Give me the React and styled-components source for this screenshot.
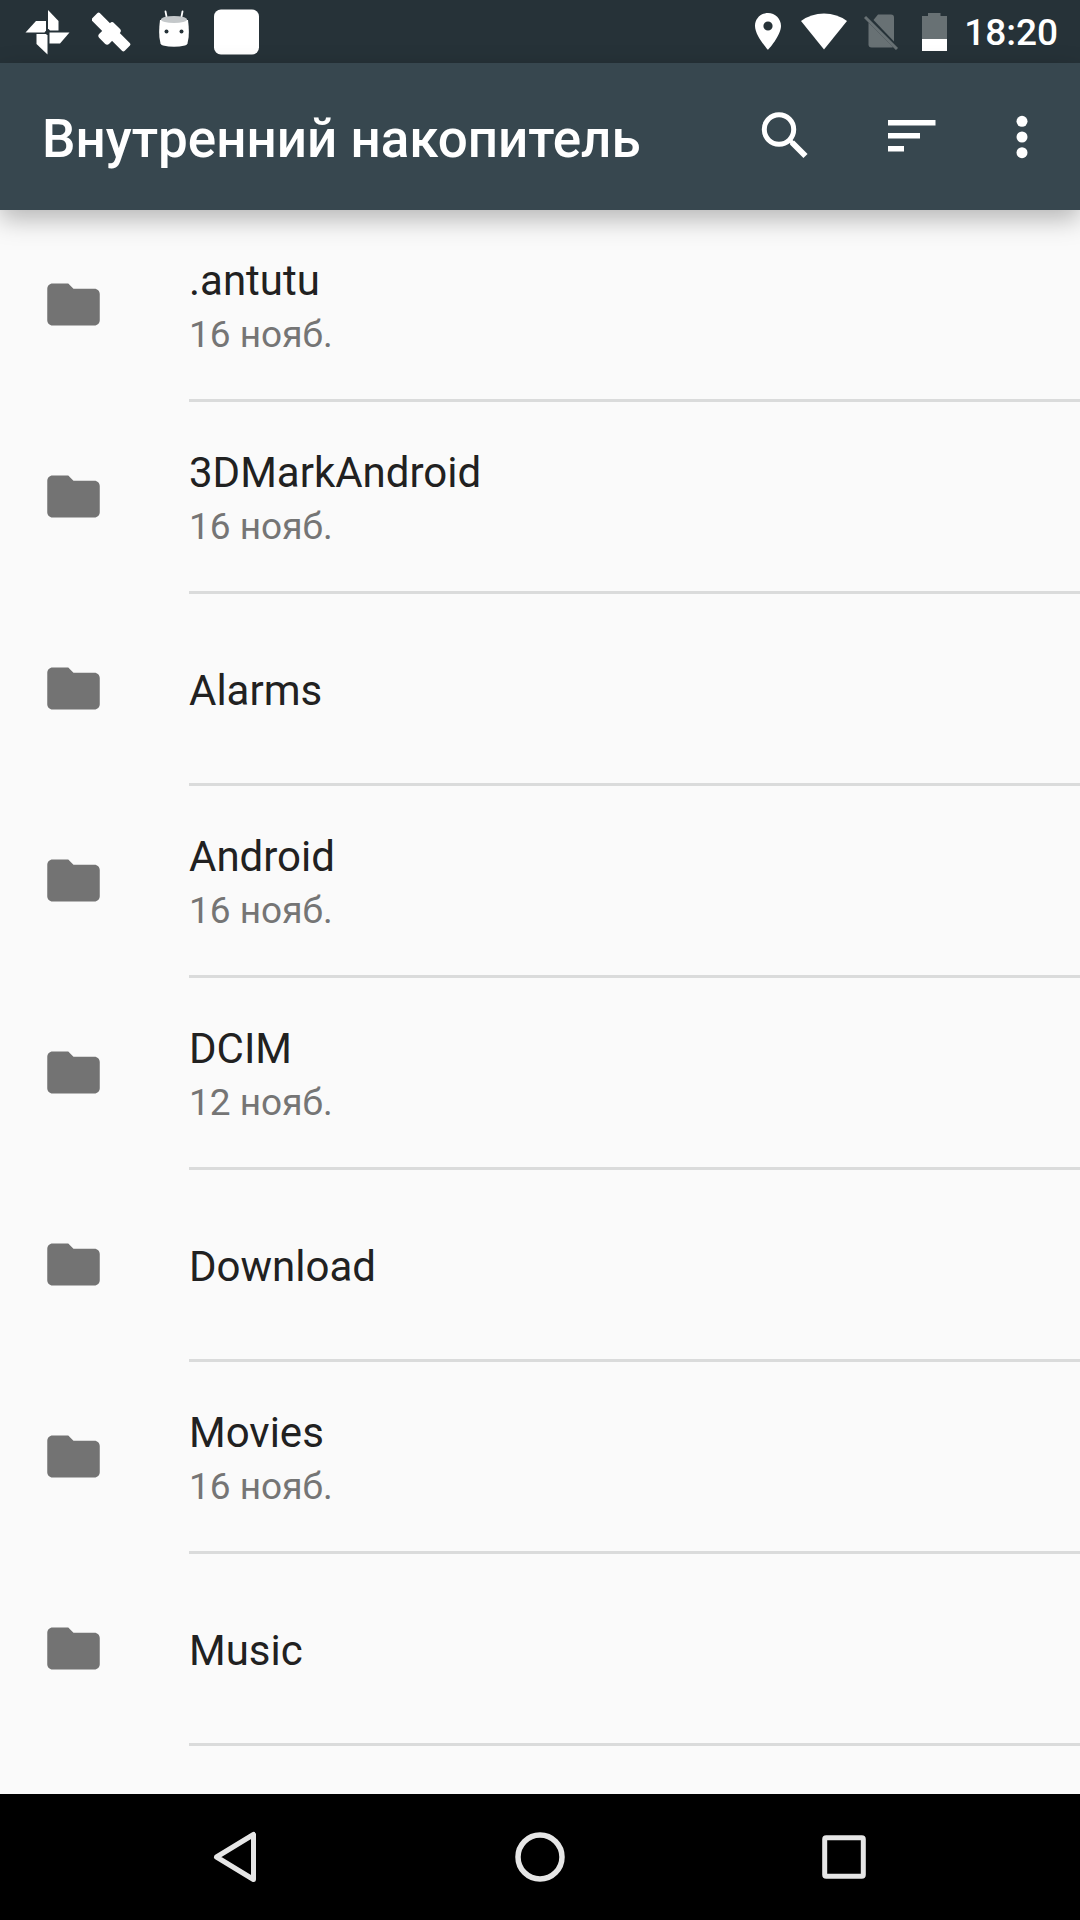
import React from 'react';
import styled, { createGlobalStyle } from 'styled-components';

const GlobalStyle = createGlobalStyle`
  * {
    box-sizing: border-box;
  }

  body {
    margin: 0;
    background: #fafafa;
    font-family: Roboto, 'Noto Sans', sans-serif;
  }

  button {
    padding: 0;
    border: 0;
    background: none;
    color: inherit;
    font: inherit;
  }

  svg {
    display: block;
    flex-shrink: 0;
  }
`;

const FOLDERS = [
  { name: '.antutu', date: '16 нояб.' },
  { name: '3DMarkAndroid', date: '16 нояб.' },
  { name: 'Alarms' },
  { name: 'Android', date: '16 нояб.' },
  { name: 'DCIM', date: '12 нояб.' },
  { name: 'Download' },
  { name: 'Movies', date: '16 нояб.' },
  { name: 'Music' },
];

const Screen = styled.div`
  display: flex;
  flex-direction: column;
  min-height: 100vh;
`;

const StatusBar = styled.div`
  display: flex;
  align-items: center;
  justify-content: space-between;
  height: 63px;
  padding: 0 22px 0 24px;
  background: #263238;
  color: #fff;
`;

const StatusGroup = styled.div`
  display: flex;
  align-items: center;
  gap: ${({ $gap }) => $gap}px;
`;

const Clock = styled.time`
  padding-top: 2px;
  font-size: 37px;
  font-weight: 500;
  line-height: 44px;
`;

const AppBar = styled.header`
  position: relative;
  display: flex;
  align-items: center;
  height: 147px;
  padding: 0 38px 0 42px;
  background: #37474f;
  color: #fff;
  box-shadow: 0 9px 24px rgba(0, 0, 0, 0.28);
`;

const Title = styled.h1`
  flex: 1;
  margin: 0;
  padding-top: 4px;
  font-size: 53px;
  font-weight: 500;
  line-height: 64px;
`;

const Actions = styled.div`
  display: flex;
  align-items: center;
  gap: 54px;
`;

const IconButton = styled.button`
  display: flex;
  align-items: center;
  justify-content: center;
  width: ${({ $width }) => $width || 72}px;
  height: 72px;
`;

const List = styled.ul`
  flex: 1;
  margin: 0;
  padding: 0;
  list-style: none;
`;

const Row = styled.li`
  display: flex;
  height: 192px;
`;

const FolderCell = styled.div`
  display: flex;
  align-items: center;
  width: 189px;
  padding: 0 0 3px 42px;
  color: #737373;
`;

const TextCell = styled.div`
  display: flex;
  flex: 1;
  flex-direction: column;
  justify-content: center;
  gap: 8px;
  padding-top: 4px;
  border-bottom: 3px solid #dadbdb;
`;

const Name = styled.span`
  color: #212121;
  font-size: 42px;
  line-height: 48px;
`;

const DateText = styled.span`
  color: #757575;
  font-size: 37px;
  line-height: 44px;
`;

const NavBar = styled.nav`
  display: flex;
  align-items: center;
  justify-content: center;
  height: 126px;
  background: #000;
  color: #e6e6e6;
`;

const NavButton = styled.button`
  display: flex;
  flex: 0 1 304px;
  align-items: center;
  justify-content: center;
  height: 126px;
`;

const PinwheelIcon = () => (
  <svg width="46" height="46" viewBox="0 0 46 46" fill="#fff">
    <path d="M24 1 34.500 12V21.500H26L24 19.500z" />
    <path d="M1.500 23.500 12 12H22V21.500L20.500 23.500z" />
    <path d="M45.500 23.500H25.500V34.500H36z" />
    <path d="M23.500 45.500 12.500 35V25H22L23.500 26.500z" />
  </svg>
);

const SatelliteIcon = () => (
  <svg width="44" height="40" viewBox="0 0 44 40" fill="#fff">
    <g transform="translate(19 20) rotate(45)">
      <rect x="-23" y="-5.500" width="46" height="11" rx="2" />
      <rect x="-7" y="-8.500" width="14" height="21" rx="3" />
    </g>
  </svg>
);

const RobotIcon = () => (
  <svg width="34" height="43" viewBox="0 0 34 43">
    <path d="M7.500 1.500 9 9M24.500 1.500 23 9" stroke="#fff" strokeWidth="1.800" strokeLinecap="round" />
    <path d="M2 10C1 18 .5 26 2.500 33.500Q3 35 5 35.500Q16 38 27 35.500Q29 35 29.500 33.500C31.500 26 31 18 30 10z" fill="#fff" />
    <ellipse cx="16" cy="9.500" rx="13" ry="3.600" fill="#c4c8ca" />
    <circle cx="8.500" cy="21.500" r="2" fill="#263238" />
    <circle cx="23.500" cy="21.500" r="2" fill="#263238" />
  </svg>
);

const SquareIcon = () => (
  <svg width="46" height="46" viewBox="0 0 46 46">
    <rect x="0" y="0.500" width="45" height="45" rx="7" fill="#fff" />
  </svg>
);

const LocationIcon = () => (
  <svg width="29" height="37" viewBox="0 0 29 37" fill="#fff">
    <path
      fillRule="evenodd"
      d="M13 0C5.800 0 0 5.800 0 13c0 9.700 13 24 13 24s13-14.300 13-24C26 5.800 20.200 0 13 0zm0 17.600a4.600 4.600 0 1 1 0-9.200 4.600 4.600 0 0 1 0 9.200z"
    />
  </svg>
);

const WifiIcon = () => (
  <svg width="46" height="37" viewBox="0 0 46 37" fill="#fff">
    <path d="M23 36.500 0 8Q10 .5 23 .5T46 8z" />
  </svg>
);

const NoSimIcon = () => (
  <svg width="41" height="37" viewBox="0 0 41 37">
    <path d="M14 1.500H27Q30 1.500 30 4.500V28.500L9.500 7z" fill="#687174" />
    <path d="M4.500 9.500V31.500Q4.500 34.500 7.500 34.500H27.500Q28.500 34.500 29 34z" fill="#687174" />
    <path d="M1 4 33 36" stroke="#687174" strokeWidth="3" />
  </svg>
);

const BatteryIcon = () => (
  <svg width="25" height="38" viewBox="0 0 25 38">
    <path d="M0 3H6V0H18.500V3H25V26H0z" fill="#687174" />
    <path d="M0 26H25V38H0z" fill="#fff" />
  </svg>
);

const SearchIcon = () => (
  <svg width="72" height="72" viewBox="0 0 72 72" fill="none" stroke="#fff">
    <circle cx="29" cy="28.500" r="14.700" strokeWidth="5" />
    <path d="M42 41.500 55.500 55" strokeWidth="5.800" />
    <path d="M39 38.500 43 42.500" strokeWidth="4.500" />
  </svg>
);

const SortIcon = () => (
  <svg width="72" height="72" viewBox="0 0 72 72" fill="#fff">
    <path d="M12 19H59.500V24.500H12zM12 32H44V37.500H12zM12 45H28V50.500H12z" />
  </svg>
);

const MoreIcon = () => (
  <svg width="12" height="46" viewBox="0 0 12 46" fill="#fff">
    <circle cx="6" cy="7.300" r="5.500" />
    <circle cx="6" cy="23" r="5.500" />
    <circle cx="6" cy="38.700" r="5.500" />
  </svg>
);

const FolderIcon = () => (
  <svg width="63" height="63" viewBox="0 0 24 24" fill="currentColor">
    <path d="M10 4H4c-1.100 0-1.990.9-1.990 2L2 18c0 1.100.9 2 2 2h16c1.100 0 2-.9 2-2V8c0-1.100-.9-2-2-2h-8l-2-2z" />
  </svg>
);

const BackIcon = () => (
  <svg width="50" height="54" viewBox="0 0 50 54" fill="none" stroke="currentColor">
    <path d="M5.500 27 42.500 4.500V49.500z" strokeWidth="5" strokeLinejoin="round" />
  </svg>
);

const HomeIcon = () => (
  <svg width="50" height="50" viewBox="0 0 50 50" fill="none" stroke="currentColor">
    <circle cx="25" cy="25" r="22" strokeWidth="5.500" />
  </svg>
);

const RecentIcon = () => (
  <svg width="44" height="44" viewBox="0 0 44 44" fill="none" stroke="currentColor">
    <rect x="2.700" y="2.700" width="38.600" height="38.600" rx="1.500" strokeWidth="5" />
  </svg>
);

const FolderRow = ({ name, date }) => (
  <Row>
    <FolderCell>
      <FolderIcon />
    </FolderCell>
    <TextCell>
      <Name>{name}</Name>
      {date && <DateText>{date}</DateText>}
    </TextCell>
  </Row>
);

const App = () => (
  <>
    <GlobalStyle />
    <Screen>
      <StatusBar>
        <StatusGroup $gap={22}>
          <PinwheelIcon />
          <SatelliteIcon />
          <RobotIcon />
          <SquareIcon />
        </StatusGroup>
        <StatusGroup $gap={17}>
          <LocationIcon />
          <WifiIcon />
          <NoSimIcon />
          <BatteryIcon />
          <Clock>18:20</Clock>
        </StatusGroup>
      </StatusBar>
      <AppBar>
        <Title>Внутренний накопитель</Title>
        <Actions>
          <IconButton aria-label="Поиск">
            <SearchIcon />
          </IconButton>
          <IconButton aria-label="Сортировка">
            <SortIcon />
          </IconButton>
          <IconButton $width={40} aria-label="Ещё">
            <MoreIcon />
          </IconButton>
        </Actions>
      </AppBar>
      <List>
        {FOLDERS.map((folder) => (
          <FolderRow key={folder.name} {...folder} />
        ))}
      </List>
      <NavBar>
        <NavButton aria-label="Назад">
          <BackIcon />
        </NavButton>
        <NavButton aria-label="Домой">
          <HomeIcon />
        </NavButton>
        <NavButton aria-label="Недавние">
          <RecentIcon />
        </NavButton>
      </NavBar>
    </Screen>
  </>
);

export default App;
